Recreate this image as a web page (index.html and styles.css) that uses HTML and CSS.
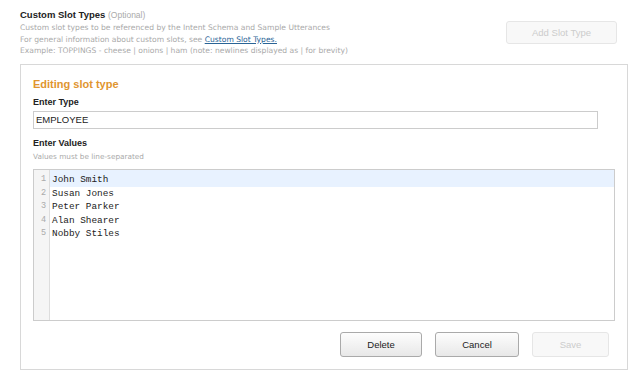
FILE: index.html
```html
<!DOCTYPE html>
<html>
<head>
<meta charset="utf-8">
<link rel="stylesheet" href="styles.css">
</head>
<body>
<div class="page">
  <div class="header">
    <div class="intro">
      <div class="title">Custom Slot Types <span class="opt">(Optional)</span></div>
      <div class="desc">Custom slot types to be referenced by the Intent Schema and Sample Utterances</div>
      <div class="desc">For general information about custom slots, see <a class="link" href="#">Custom Slot Types.</a></div>
      <div class="desc">Example: TOPPINGS - cheese | onions | ham (note: newlines displayed as | for brevity)</div>
    </div>
    <button class="btn btn-add" disabled>Add Slot Type</button>
  </div>
  <div class="panel">
    <div class="heading">Editing slot type</div>
    <div class="label">Enter Type</div>
    <div class="input">EMPLOYEE</div>
    <div class="label label-values">Enter Values</div>
    <div class="hint">Values must be line-separated</div>
    <div class="editor">
      <div class="gutter">
        <div class="ln first">1</div>
        <div class="ln">2</div>
        <div class="ln">3</div>
        <div class="ln">4</div>
        <div class="ln">5</div>
      </div>
      <div class="code">
        <div class="line first active">John Smith</div>
        <div class="line">Susan Jones</div>
        <div class="line">Peter Parker</div>
        <div class="line">Alan Shearer</div>
        <div class="line">Nobby Stiles</div>
      </div>
    </div>
    <div class="actions">
      <button class="btn btn-delete">Delete</button>
      <button class="btn btn-cancel">Cancel</button>
      <button class="btn btn-save" disabled>Save</button>
    </div>
  </div>
</div>
</body>
</html>
```
FILE: styles.css
```css
* { box-sizing: border-box; }
html, body { margin: 0; padding: 0; background: #fff; }
body { font-family: "Liberation Sans", Arial, sans-serif; color: #222; }
.page { padding: 8px 12px 0 20px; width: 640px; }
.header { display: flex; justify-content: space-between; align-items: flex-start; }
.title { font-size: 9.5px; font-weight: bold; line-height: 14px; color: #222; }
.opt { font-weight: normal; color: #aaa; font-size: 8.5px; }
.desc { font-family: "DejaVu Sans", Verdana, sans-serif; font-size: 7.6px; line-height: 11.7px; color: #aaa; }
.link { color: #2a6496; text-decoration: underline; }
.btn {
  font-family: "Liberation Sans", Arial, sans-serif;
  font-size: 9.5px;
  height: 25px;
  border-radius: 3px;
  padding: 0;
  color: #222;
  border: 1px solid #aaa;
  background: linear-gradient(#fdfdfd, #e8e8e8);
}
.btn-add {
  margin-top: 13px;
  margin-right: 11px;
  width: 111px;
  height: 23px;
  color: #ccc;
  background: #f8f8f8;
  border: 1px solid #e6e6e6;
}
.panel {
  margin-top: 7px;
  width: 608px;
  border: 1px solid #d8d8d8;
  padding: 12px 12px 12px 12px;
}
.heading { font-size: 11px; font-weight: bold; line-height: 14px; color: #e0952f; }
.label { font-size: 9px; font-weight: bold; line-height: 14px; margin-top: 4px; color: #222; }
.label-values { margin-top: 7px; }
.input {
  margin-top: 2px;
  width: 565px;
  height: 18px;
  border: 1px solid #ccc;
  font-size: 9.5px;
  line-height: 16px;
  padding-left: 2px;
  color: #222;
}
.hint { font-family: "DejaVu Sans", Verdana, sans-serif; font-size: 7.3px; line-height: 12px; color: #aaa; margin-top: 1px; }
.editor {
  margin-top: 6px;
  display: flex;
  height: 152px;
  border: 1px solid #ccc;
}
.gutter {
  width: 16px;
  background: #f5f5f5;
  border-right: 1px solid #ddd;
  flex: none;
}
.ln {
  font-family: "Liberation Mono", "Courier New", monospace;
  font-size: 8.5px;
  line-height: 13.6px;
  color: #aaa;
  text-align: right;
  padding-right: 3px;
}
.code { flex: 1; }
.line {
  font-family: "Liberation Mono", "Courier New", monospace;
  font-size: 9.4px;
  line-height: 13.6px;
  color: #222;
  padding-left: 2px;
}
.first { padding-top: 3px; }
.active { background: #e8f2ff; }
.actions {
  margin-top: 11px;
  display: flex;
  justify-content: flex-end;
  gap: 13px;
  padding-right: 6px;
}
.btn-delete { width: 82px; }
.btn-cancel { width: 84px; }
.btn-save {
  width: 77px;
  color: #ccc;
  background: #f8f8f8;
  border: 1px solid #e6e6e6;
}
```
